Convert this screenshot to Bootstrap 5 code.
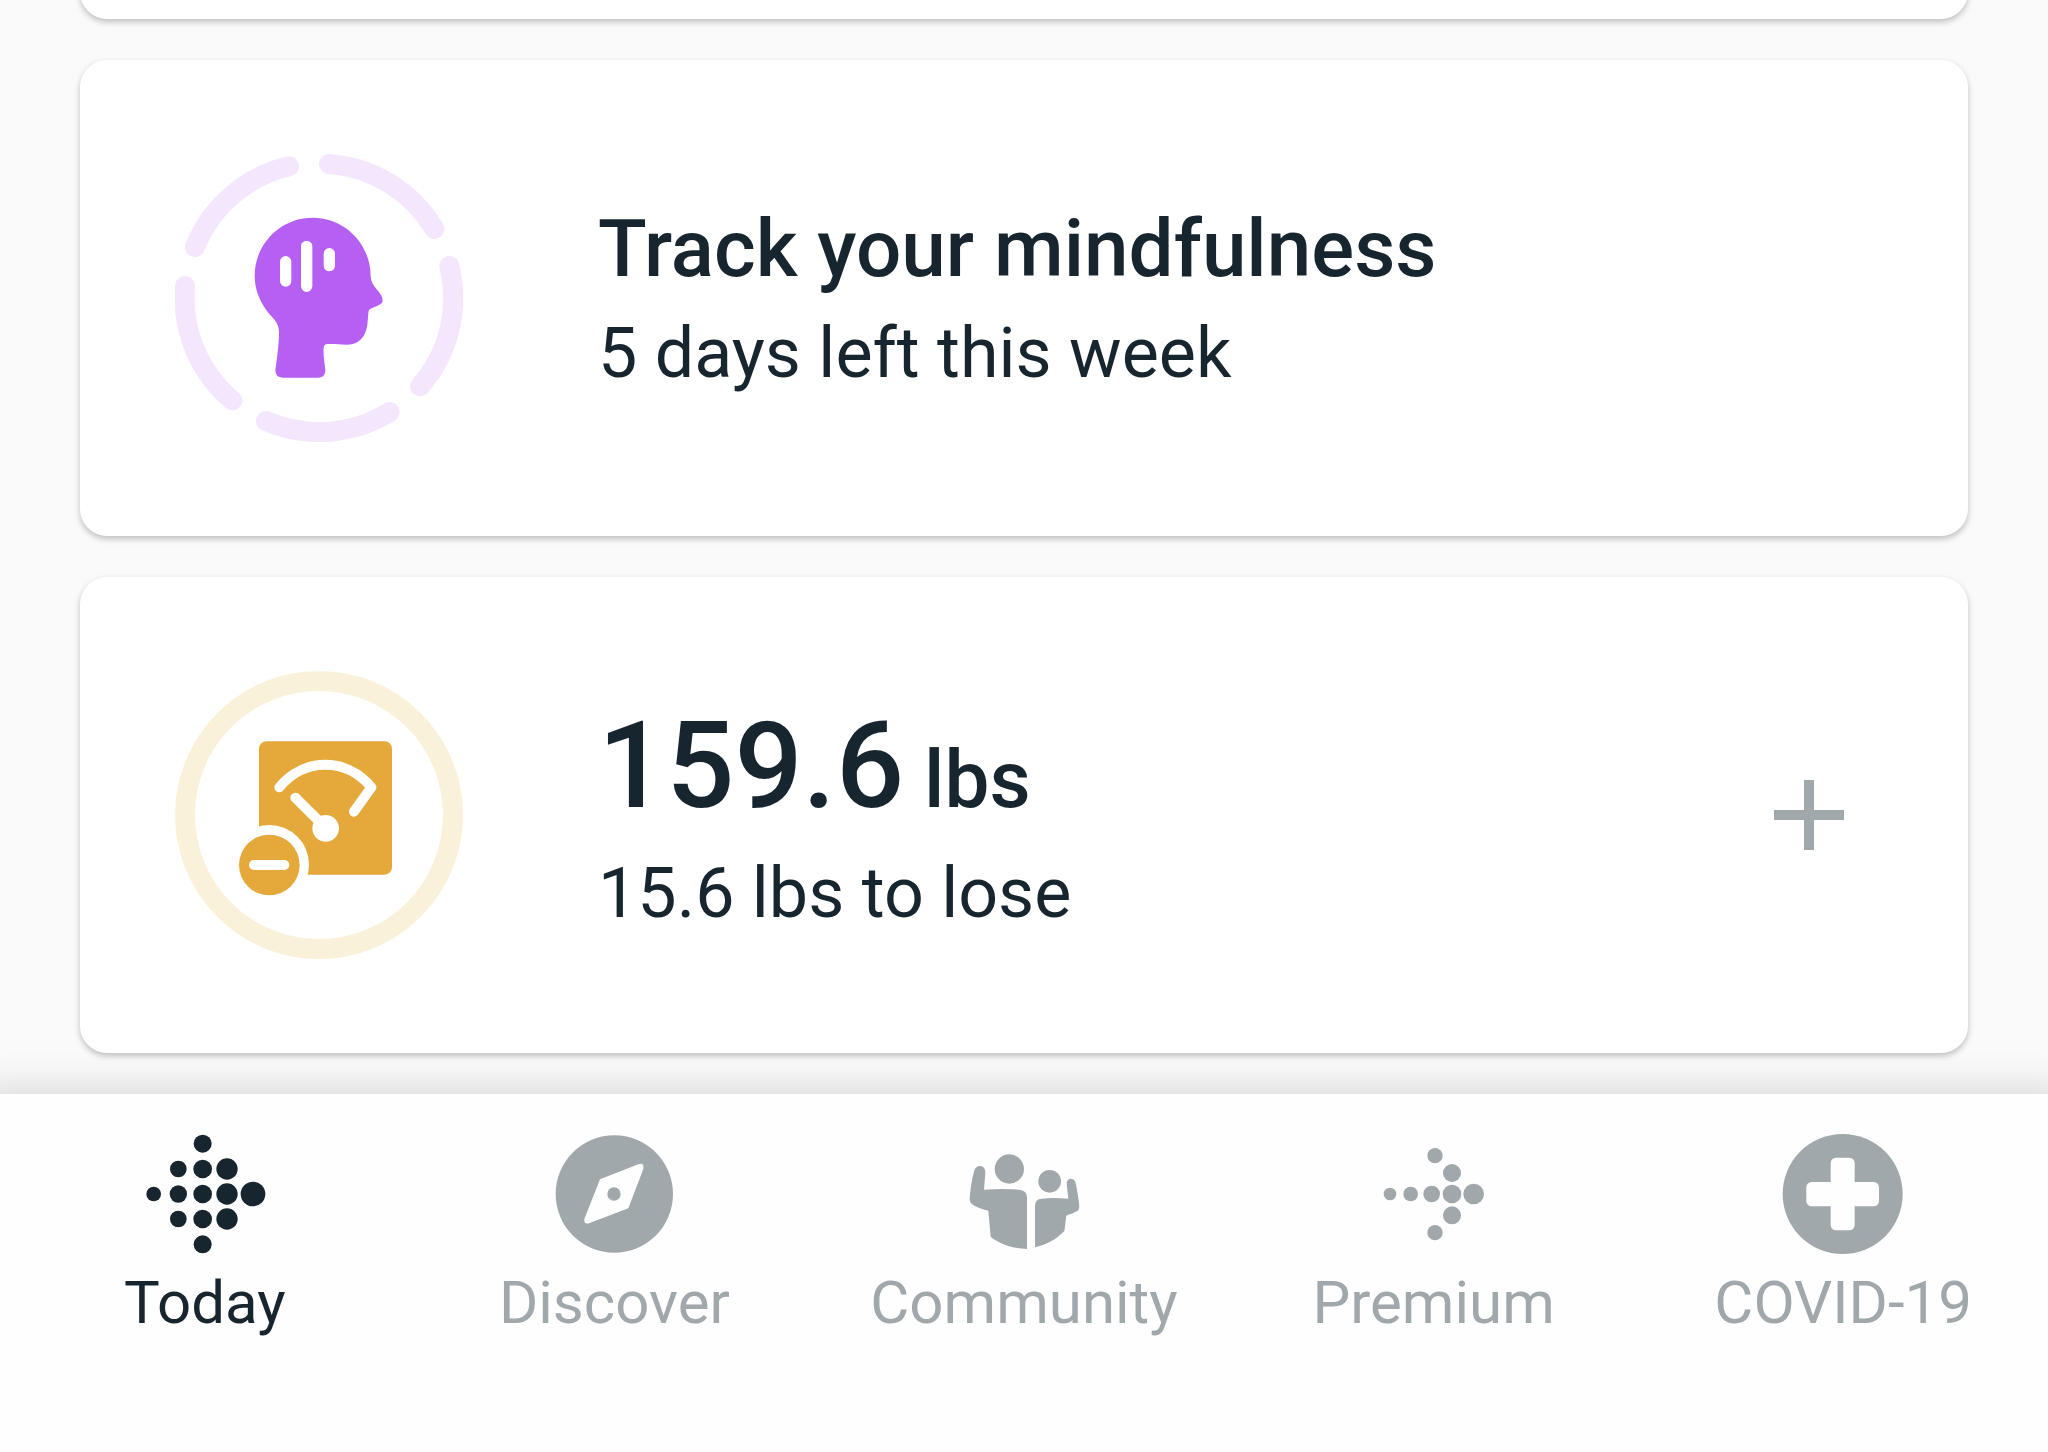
<!DOCTYPE html>
<html lang="en">
<head>
<meta charset="utf-8">
<meta name="viewport" content="width=device-width, initial-scale=1">
<title>Today</title>
<link href="https://cdn.jsdelivr.net/npm/bootstrap@5.3.0/dist/css/bootstrap.min.css" rel="stylesheet">
<style>
  body { font-family: Roboto, "Liberation Sans", sans-serif; background: #fafafa; color: #17252f; }
  .feed { padding: 0 80px 41px; gap: 41px; }
  .tile { border: 0; border-radius: 27px; background: #fff; box-shadow: 0 3px 6px rgba(0, 0, 0, .24); }
  .tile-prev { height: 60px; margin-top: -41px; }
  .tile-body { padding: 94px 124px 94px 95px; }
  .ring { width: 288px; height: 288px; }
  .tile-text { margin-left: 135px; gap: 16px; }
  .tile-title { font-size: 80px; line-height: 94px; font-weight: 500; }
  .tile-value { font-size: 120px; line-height: 140px; font-weight: 500; }
  .tile-unit { font-size: 80px; line-height: 94px; white-space: pre; }
  .tile-sub { font-size: 70px; line-height: 82px; }
  .add-btn svg { width: 70px; height: 70px; }
  .tabs { background: #fefefe; padding-top: 40px; box-shadow: 0 20px 40px 20px rgba(0, 0, 0, .18); z-index: 1; }
  .tab { color: #a1a8ab; font-size: 60px; line-height: 70px; gap: 14px; flex: 1 1 0; min-width: 0; }
  .tab.active { color: #17252f; }
  .tab svg { width: 120px; height: 120px; overflow: visible; }
</style>
<script src="https://cdn.jsdelivr.net/npm/bootstrap@5.3.0/dist/js/bootstrap.bundle.min.js"></script>
</head>
<body>
<div class="d-flex flex-column min-vh-100 overflow-hidden">
  <main class="feed d-flex flex-column">
    <div class="card tile tile-prev"></div>

    <section class="card tile">
      <div class="tile-body d-flex align-items-center">
        <svg class="ring flex-shrink-0" viewBox="45 41 864 864" aria-hidden="true">
          <g fill="none" stroke="#f3e6fd" stroke-width="60" stroke-linecap="round">
            <path d="M507 71A402 402 0 0 1 823 266"/>
            <path d="M868 377A402 402 0 0 1 780 738"/>
            <path d="M689 815A402 402 0 0 1 318 842"/>
            <path d="M217 780A402 402 0 0 1 75 437"/>
            <path d="M105 320A402 402 0 0 1 387 78"/>
          </g>
          <path fill="#b65ff3" d="M458 232C556 232 632 312 632 408C632 440 668 456 668 481C668 497 628 500 626 512C622 535 626 560 612 585C602 603 584 613 562 613C540 613 520 610 502 611Q492 612 491 622C489 645 494 668 496 690Q496 711 476 712H368Q346 711 346 690C352 645 357 610 357 575C357 550 343 537 330 523C302 490 284 450 284 407C284 310 362 232 458 232Z"/>
          <g stroke="#fff" stroke-width="34" stroke-linecap="round"><path d="M377 364V422M440 318V438M508 340V376"/></g>
        </svg>
        <div class="tile-text d-flex flex-column">
          <h2 class="tile-title m-0">Track your mindfulness</h2>
          <p class="tile-sub m-0">5 days left this week</p>
        </div>
      </div>
    </section>

    <section class="card tile">
      <div class="tile-body d-flex align-items-center">
        <svg class="ring flex-shrink-0" viewBox="45 63 864 864" aria-hidden="true">
          <circle cx="477" cy="495" r="402" fill="none" stroke="#faf1da" stroke-width="60"/>
          <rect x="297" y="274" width="399" height="400" rx="22" fill="#e4a93a"/>
          <circle cx="328" cy="644" r="119" fill="#fff"/>
          <circle cx="328" cy="645" r="91" fill="#e4a93a"/>
          <g fill="none" stroke="#fff" stroke-width="30" stroke-linecap="round" stroke-linejoin="round">
            <path d="M358 412C432 322 560 322 634 412L582 485M406 443L490 526M282 645H373"/>
          </g>
          <circle cx="497" cy="535" r="40" fill="#fff"/>
        </svg>
        <div class="tile-text d-flex flex-column">
          <h2 class="tile-value m-0">159.6<span class="tile-unit"> lbs</span></h2>
          <p class="tile-sub m-0">15.6 lbs to lose</p>
        </div>
        <button type="button" class="add-btn btn border-0 p-0 ms-auto d-flex" aria-label="Add">
          <svg viewBox="0 0 70 70" fill="#a1a8ab"><path d="M30 0h10v30h30v10H40v30H30V40H0V30h30z"/></svg>
        </button>
      </div>
    </section>
  </main>

  <nav class="tabs d-flex flex-grow-1 position-relative">
    <a href="#" class="tab active d-flex flex-column align-items-center text-decoration-none" aria-current="page">
      <svg viewBox="74 69 360 360" fill="currentColor" aria-hidden="true">
        <circle cx="100" cy="249" r="22"/><circle cx="174" cy="174" r="25"/><circle cx="174" cy="249" r="26"/><circle cx="174" cy="324" r="25"/>
        <circle cx="247" cy="98" r="27"/><circle cx="247" cy="174" r="28"/><circle cx="247" cy="249" r="28"/><circle cx="247" cy="324" r="28"/><circle cx="247" cy="400" r="27"/>
        <circle cx="320" cy="174" r="32"/><circle cx="320" cy="249" r="32"/><circle cx="320" cy="324" r="32"/><circle cx="398" cy="249" r="37"/>
      </svg>
      Today
    </a>
    <a href="#" class="tab d-flex flex-column align-items-center text-decoration-none">
      <svg viewBox="223 69 360 360" aria-hidden="true">
        <circle cx="404" cy="249" r="176" fill="currentColor"/>
        <path fill="#fefefe" d="M361 205L476 160Q494 154 491 174L446 292L330 336Q312 342 314 324Z"/>
        <circle cx="403" cy="249" r="20" fill="currentColor"/>
      </svg>
      Discover
    </a>
    <a href="#" class="tab d-flex flex-column align-items-center text-decoration-none">
      <svg viewBox="342 69 360 360" fill="currentColor" aria-hidden="true">
        <circle cx="478" cy="174" r="44"/><circle cx="599" cy="211" r="34"/>
        <path d="M402 236C440 233 475 233 508 236Q530 238 531 258V414C485 411 450 400 422 377L415 299C396 296 378 288 366 280Q358 274 359 262C361 235 365 208 373 178C379 158 407 161 406 184Z"/>
        <path d="M555 409V284Q556 264 574 263C600 260 628 261 655 263L650 218C650 199 673 199 677 216C682 240 686 265 688 287Q688 297 680 301C670 307 660 310 649 314L643 360C615 388 587 402 555 409Z"/>
      </svg>
      Community
    </a>
    <a href="#" class="tab d-flex flex-column align-items-center text-decoration-none">
      <svg viewBox="221 69 360 360" fill="currentColor" aria-hidden="true">
        <circle cx="269" cy="249" r="19"/><circle cx="331" cy="249" r="22"/><circle cx="394" cy="249" r="25"/><circle cx="455" cy="249" r="28"/><circle cx="520" cy="249" r="31"/>
        <circle cx="404" cy="134" r="23"/><circle cx="455" cy="186" r="27"/><circle cx="455" cy="313" r="27"/><circle cx="404" cy="365" r="23"/>
      </svg>
      Premium
    </a>
    <a href="#" class="tab d-flex flex-column align-items-center text-decoration-none">
      <svg viewBox="250 69 360 360" aria-hidden="true">
        <circle cx="429" cy="249" r="180" fill="currentColor"/>
        <g fill="#fefefe"><rect x="393" y="140" width="72" height="218" rx="16"/><rect x="320" y="213" width="218" height="73" rx="16"/></g>
      </svg>
      COVID-19
    </a>
  </nav>
</div>
</body>
</html>
